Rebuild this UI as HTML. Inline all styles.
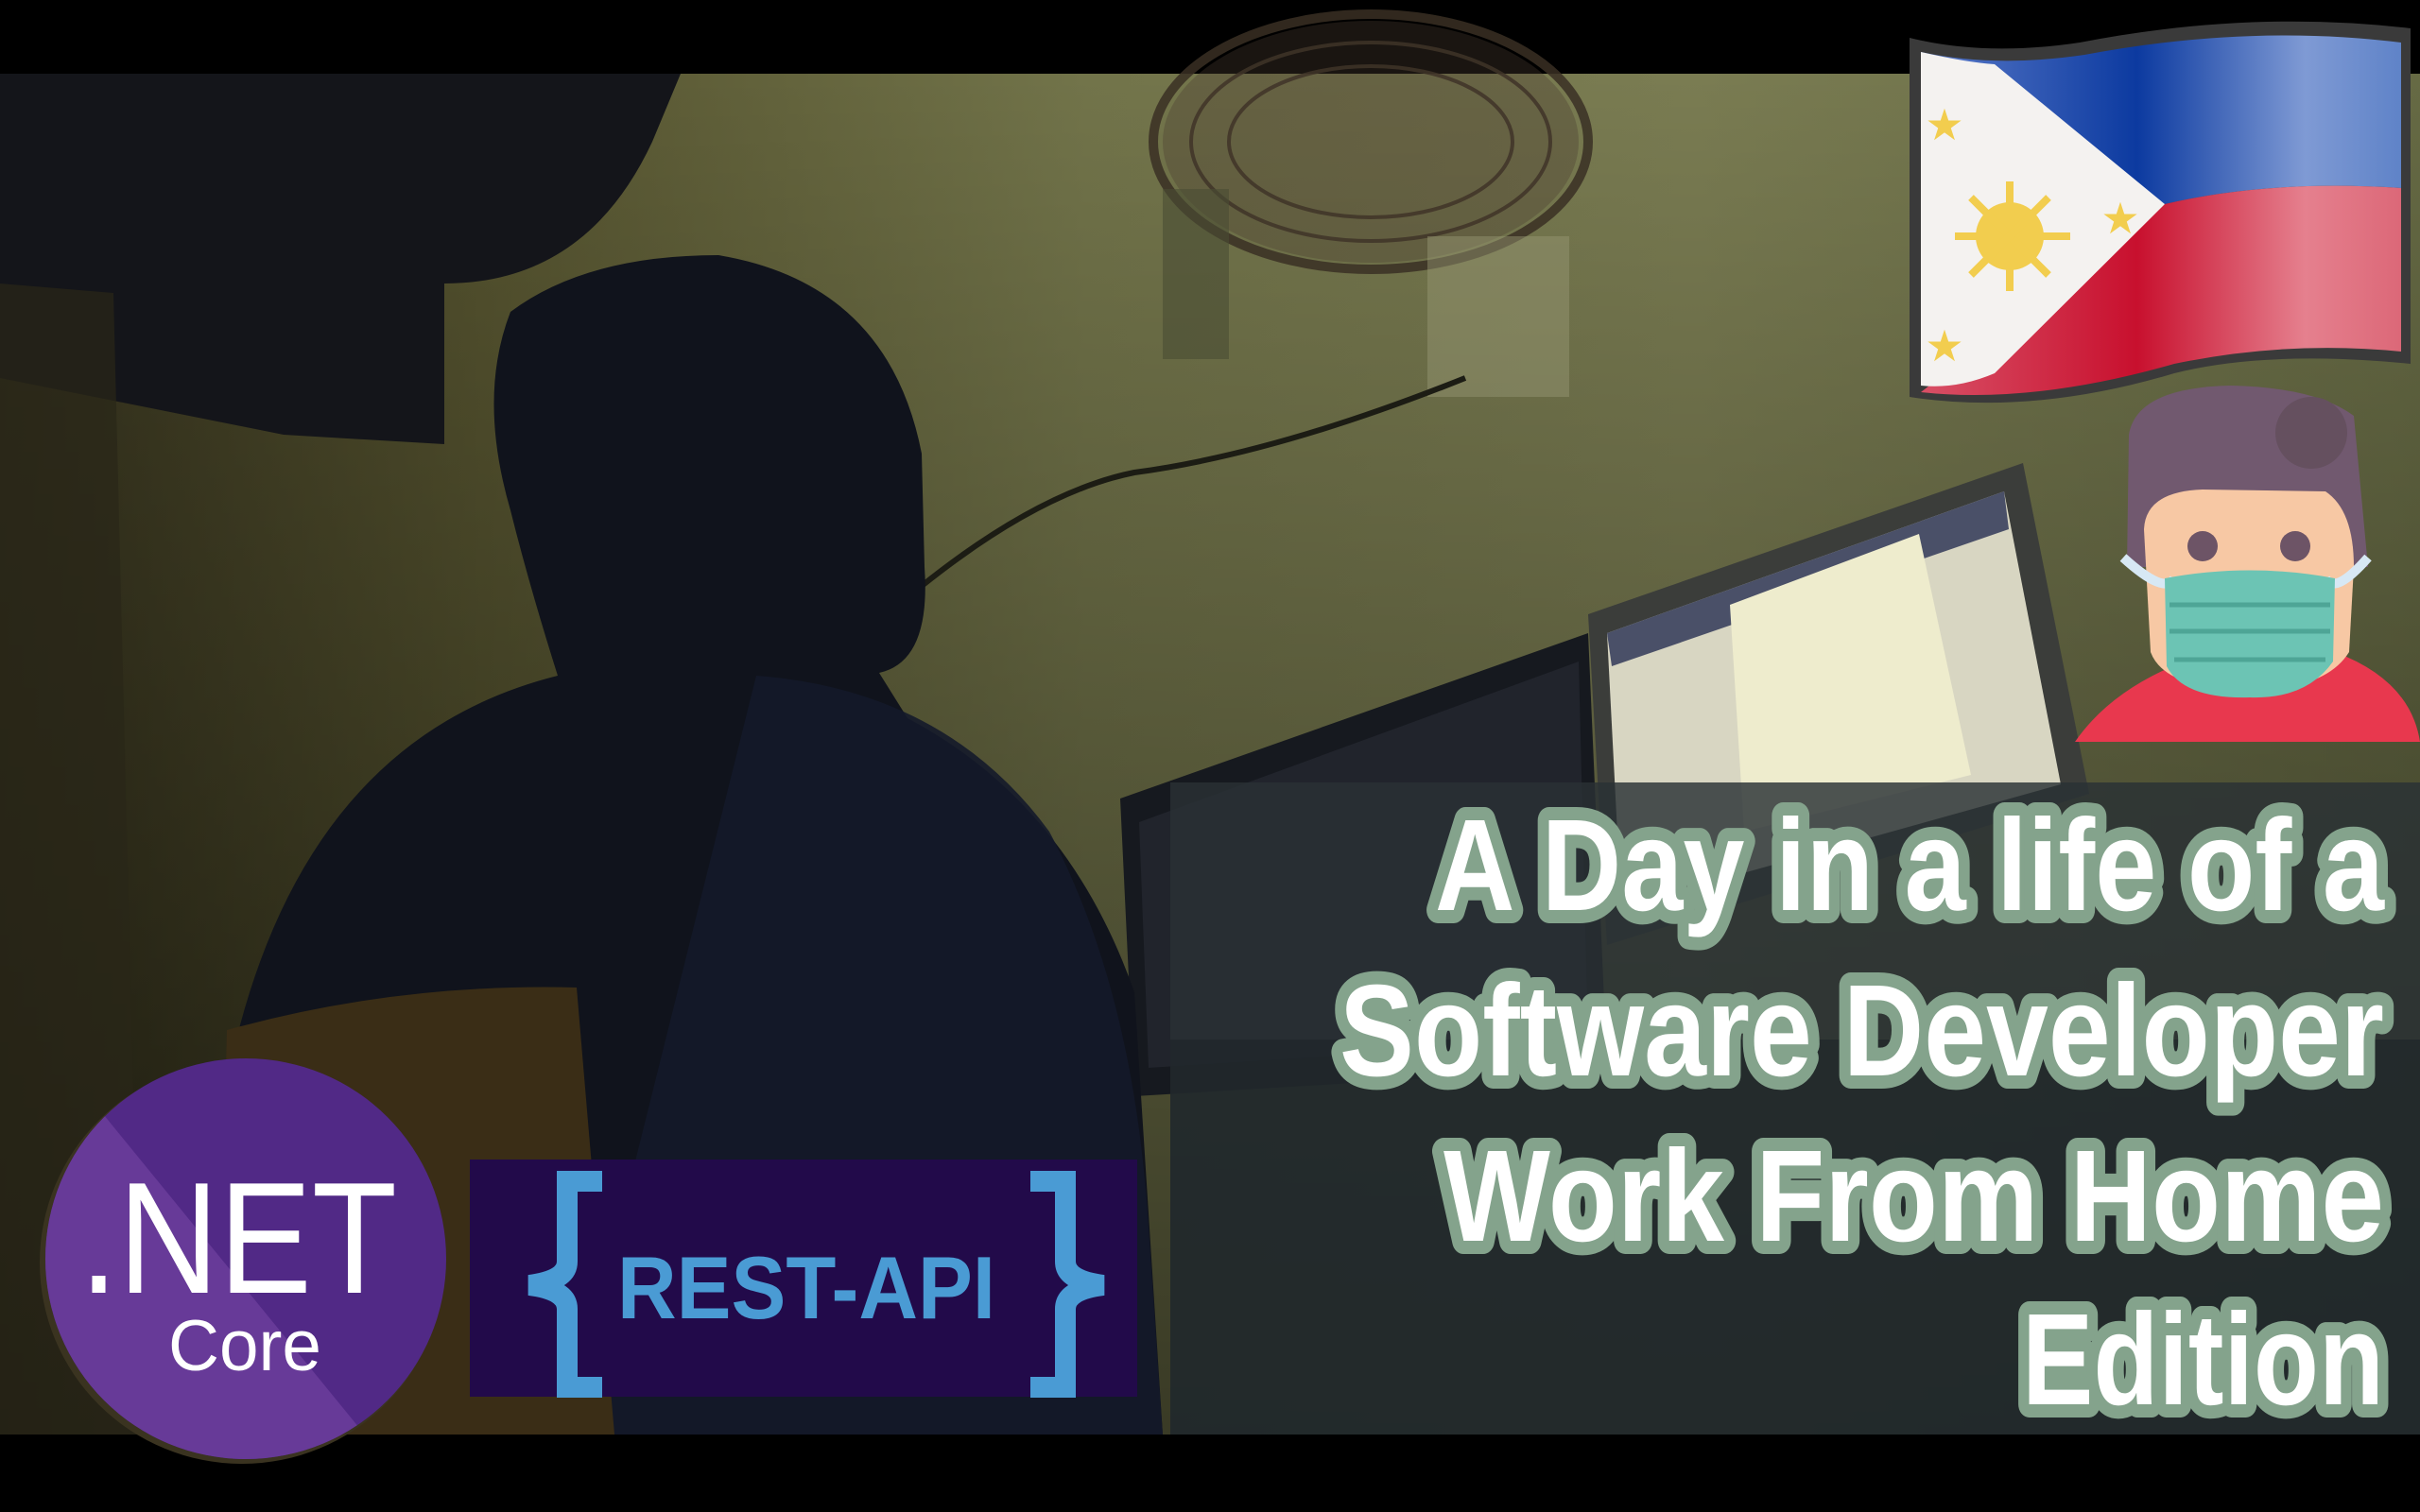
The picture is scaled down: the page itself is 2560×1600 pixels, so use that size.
<!DOCTYPE html>
<html><head><meta charset="utf-8"><style>
html,body{margin:0;padding:0;background:#000;width:2560px;height:1600px;overflow:hidden}
svg{display:block}
</style></head><body>
<svg width="2560" height="1600" viewBox="0 0 2560 1600" xmlns="http://www.w3.org/2000/svg">
<defs>
<linearGradient id="wall" x1="0" y1="0" x2="1" y2="0">
<stop offset="0" stop-color="#34311d"/><stop offset="0.2" stop-color="#55532f"/>
<stop offset="0.45" stop-color="#72744a"/><stop offset="0.7" stop-color="#7a7c52"/>
<stop offset="1" stop-color="#666a44"/></linearGradient>
<linearGradient id="wallv" x1="0" y1="0" x2="0" y2="1">
<stop offset="0" stop-color="#000" stop-opacity="0"/><stop offset="1" stop-color="#000" stop-opacity="0.5"/></linearGradient>
<linearGradient id="blue" x1="0" y1="0" x2="1" y2="0">
<stop offset="0" stop-color="#5a7ac8"/><stop offset="0.45" stop-color="#0c3aa0"/><stop offset="0.8" stop-color="#7f9ad4"/><stop offset="1" stop-color="#5f83c8"/></linearGradient>
<linearGradient id="red" x1="0" y1="0" x2="1" y2="0">
<stop offset="0" stop-color="#d85066"/><stop offset="0.45" stop-color="#c8102e"/><stop offset="0.8" stop-color="#e5808e"/><stop offset="1" stop-color="#dc6878"/></linearGradient>
<clipPath id="nc"><circle cx="260" cy="1332" r="212"/></clipPath>
</defs>
<rect width="2560" height="1600" fill="#000"/>
<rect x="0" y="78" width="2560" height="1440" fill="url(#wall)"/>
<rect x="0" y="78" width="2560" height="1440" fill="url(#wallv)"/>
<path d="M0 78 H720 L690 150 Q620 300 470 300 L470 470 L300 460 L0 400 Z" fill="#14151a"/>
<path d="M0 300 L120 310 L150 1518 H0 Z" fill="#2a2718" opacity="0.7"/>
<!-- fan -->
<g fill="none" stroke="#3a3024" opacity="0.85">
<ellipse cx="1450" cy="150" rx="230" ry="135" stroke-width="10"/>
<ellipse cx="1450" cy="150" rx="190" ry="105" stroke-width="4"/>
<ellipse cx="1450" cy="150" rx="150" ry="80" stroke-width="4"/>
</g>
<ellipse cx="1450" cy="150" rx="220" ry="128" fill="#4a3d30" opacity="0.35"/>
<rect x="1230" y="200" width="70" height="180" fill="#4a4c34" opacity="0.6"/>
<rect x="1510" y="250" width="150" height="170" fill="#9a9a76" opacity="0.45"/>
<path d="M975 620 Q1100 520 1200 500 Q1350 480 1550 400" stroke="#1c1c14" stroke-width="6" fill="none"/>
<!-- monitors -->
<path d="M1185 845 L1680 670 L1700 1130 L1200 1160 Z" fill="#16191f"/>
<path d="M1205 870 L1670 700 L1680 1100 L1215 1130 Z" fill="#21242c"/>
<path d="M1680 650 L2140 490 L2210 840 L1700 1000 Z" fill="#3b3d3a"/>
<path d="M1700 670 L2120 520 L2180 830 L1715 960 Z" fill="#d8d6c2"/>
<path d="M1700 670 L2120 520 L2125 560 L1705 705 Z" fill="#4a5068"/>
<path d="M1830 640 L2030 565 L2085 820 L1845 880 Z" fill="#eeeccd"/>
<!-- person -->
<path d="M540 330 Q620 270 760 270 Q940 300 975 480 L978 600 Q985 700 930 712 L960 760 Q1130 850 1200 1050 L1230 1518 H420 L220 1518 L250 1100 Q330 780 590 715 Q560 620 540 540 Q505 420 540 330 Z" fill="#10131c"/>
<path d="M800 715 Q1000 730 1110 880 Q1200 1050 1215 1300 L1230 1518 H600 Z" fill="#141a2a" opacity="0.9"/>
<path d="M240 1090 Q420 1040 610 1045 L650 1518 H230 Z" fill="#3a2d16"/>
<!-- panel -->
<rect x="1238" y="828" width="1322" height="690" fill="#2a3134" opacity="0.82"/>
<rect x="1238" y="1100" width="1322" height="418" fill="#1c2227" opacity="0.55"/>
<g font-family="'Liberation Sans Narrow','Liberation Sans',sans-serif" font-weight="bold" font-size="138" fill="#fff" stroke="#84a38c" stroke-width="28" stroke-linejoin="round" paint-order="stroke" text-anchor="end">
<text x="2522" y="963" textLength="1004" lengthAdjust="spacingAndGlyphs">A Day in a life of a</text>
<text x="2522" y="1138" textLength="1105" lengthAdjust="spacingAndGlyphs">Software Developer</text>
<text x="2522" y="1313" textLength="995" lengthAdjust="spacingAndGlyphs">Work From Home</text>
<text x="2522" y="1486" textLength="383" lengthAdjust="spacingAndGlyphs">Edition</text>
</g>
<!-- flag -->
<path d="M2020 40 Q2100 60 2200 45 Q2380 10 2550 30 L2550 385 Q2400 370 2300 395 Q2150 440 2020 420 Z" fill="#3a3a3a"/>
<path d="M2032 55 Q2110 72 2205 58 Q2380 25 2540 45 L2540 199 Q2400 190 2290 216 Z" fill="url(#blue)"/>
<path d="M2032 415 Q2150 428 2300 385 Q2420 360 2540 372 L2540 199 Q2400 190 2290 216 Z" fill="url(#red)"/>
<path d="M2032 55 Q2080 66 2110 68 L2290 216 L2110 395 Q2070 412 2032 408 Z" fill="#f4f2f0"/>
<circle cx="2126" cy="250" r="36" fill="#f2cd4e"/>
<g stroke="#f2cd4e" stroke-width="8">
<line x1="2126" y1="192" x2="2126" y2="308"/><line x1="2068" y1="250" x2="2190" y2="250"/>
<line x1="2085" y1="209" x2="2167" y2="291"/><line x1="2085" y1="291" x2="2167" y2="209"/>
</g>
<g fill="#f2cd4e" font-size="46" font-family="'DejaVu Sans',sans-serif" text-anchor="middle">
<text x="2057" y="148">★</text><text x="2243" y="247">★</text><text x="2057" y="382">★</text></g>
<!-- masked person -->
<path d="M2195 785 Q2240 720 2340 690 L2470 690 Q2550 720 2560 785 Z" fill="#e8384e"/>
<path d="M2252 460 Q2260 410 2360 408 Q2450 410 2490 440 L2505 600 L2250 600 Z" fill="#71596f"/>
<path d="M2268 560 Q2270 520 2330 518 L2460 520 Q2490 540 2490 600 L2485 690 Q2460 730 2380 730 Q2290 730 2275 690 Z" fill="#f7c8a4"/>
<circle cx="2445" cy="458" r="38" fill="#65505f"/>
<circle cx="2330" cy="578" r="16" fill="#6d5466"/><circle cx="2428" cy="578" r="16" fill="#6d5466"/>
<path d="M2246 590 Q2290 630 2300 612 M2505 590 Q2470 630 2460 612" stroke="#d7e8f4" stroke-width="10" fill="none"/>
<path d="M2290 612 Q2380 595 2470 612 L2468 700 Q2440 740 2380 738 Q2310 740 2292 705 Z" fill="#6cc4b4"/>
<g stroke="#4ea596" stroke-width="5"><line x1="2295" y1="640" x2="2465" y2="640"/><line x1="2295" y1="668" x2="2465" y2="668"/><line x1="2300" y1="698" x2="2460" y2="698"/></g>
<!-- .NET -->
<ellipse cx="256" cy="1336" rx="214" ry="213" fill="#3a3320"/>
<g clip-path="url(#nc)">
<rect x="40" y="1110" width="440" height="440" fill="#512986"/>
<path d="M40 1180 L110 1180 L420 1560 L40 1560 Z" fill="#673a98"/>
</g>
<text x="84" y="1368" font-family="'Liberation Sans',sans-serif" font-size="168" fill="#fff" textLength="336" lengthAdjust="spacingAndGlyphs">.NET</text>
<text x="178" y="1450" font-family="'Liberation Sans',sans-serif" font-size="76" fill="#fff" textLength="162" lengthAdjust="spacingAndGlyphs">Core</text>
<!-- REST API -->
<rect x="497" y="1227" width="706" height="251" fill="#220a4a"/>
<g fill="none" stroke="#4a9bd4" stroke-width="22">
<path d="M637 1250 H600 V1335 Q600 1355 560 1360 Q600 1365 600 1385 V1468 H637"/>
<path d="M1090 1250 H1127 V1335 Q1127 1355 1167 1360 Q1127 1365 1127 1385 V1468 H1090"/>
</g>
<text x="653" y="1395" font-family="'Liberation Sans Narrow','Liberation Sans',sans-serif" font-weight="bold" font-size="94" fill="#4a9bd4" textLength="400" lengthAdjust="spacingAndGlyphs">REST-API</text>
</svg>
</body></html>
